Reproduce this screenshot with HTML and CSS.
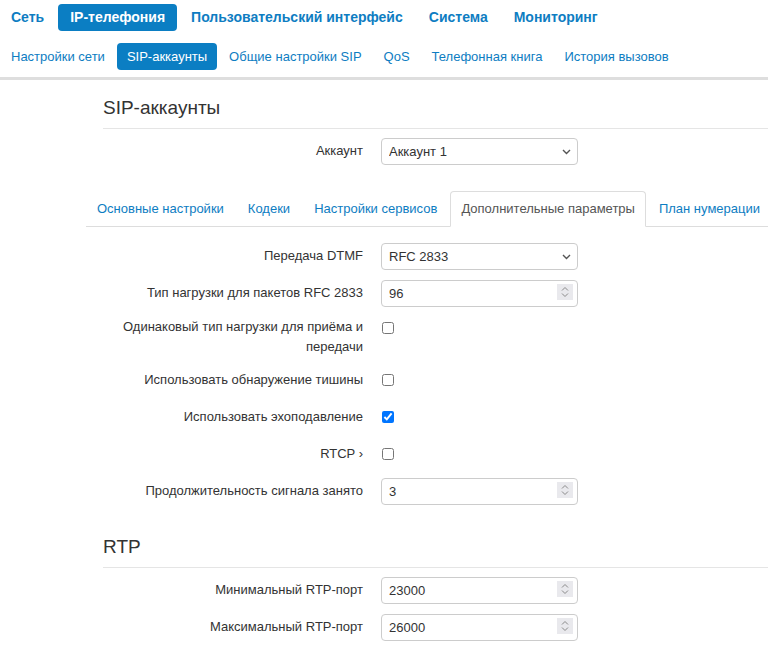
FILE: index.html
```html
<!DOCTYPE html>
<html lang="ru">
<head>
<meta charset="utf-8">
<title>SIP-аккаунты</title>
<link rel="stylesheet" href="styles.css">
</head>
<body>
<header class="header">
  <nav class="nav nav-main">
    <a class="nav-item">Сеть</a>
    <a class="nav-item active">IP-телефония</a>
    <a class="nav-item">Пользовательский интерфейс</a>
    <a class="nav-item">Система</a>
    <a class="nav-item">Мониторинг</a>
  </nav>
  <nav class="nav nav-sub">
    <a class="nav-item">Настройки сети</a>
    <a class="nav-item active">SIP-аккаунты</a>
    <a class="nav-item">Общие настройки SIP</a>
    <a class="nav-item">QoS</a>
    <a class="nav-item">Телефонная книга</a>
    <a class="nav-item">История вызовов</a>
  </nav>
</header>

<main class="main">
  <h2 class="section-title first">SIP-аккаунты</h2>
  <div class="row">
    <label class="label">Аккаунт</label>
    <div class="control select-wrap">
      <select class="input"><option>Аккаунт 1</option></select>
      <svg class="chev" width="9" height="6" viewBox="0 0 9 6"><path d="M1 1l3.5 3.5L8 1" fill="none" stroke="#555" stroke-width="1.4"/></svg>
    </div>
  </div>

  <ul class="tabs">
    <li class="tab">Основные настройки</li>
    <li class="tab">Кодеки</li>
    <li class="tab">Настройки сервисов</li>
    <li class="tab active">Дополнительные параметры</li>
    <li class="tab">План нумерации</li>
  </ul>

  <div class="form">
    <div class="row">
      <label class="label">Передача DTMF</label>
      <div class="control select-wrap">
        <select class="input"><option>RFC 2833</option></select>
        <svg class="chev" width="9" height="6" viewBox="0 0 9 6"><path d="M1 1l3.5 3.5L8 1" fill="none" stroke="#555" stroke-width="1.4"/></svg>
      </div>
    </div>
    <div class="row">
      <label class="label">Тип нагрузки для пакетов RFC 2833</label>
      <div class="control num-wrap">
        <input class="input" type="text" value="96">
        <span class="spin"><svg width="16" height="16" viewBox="0 0 16 16"><path d="M5 6.5L8 3.5l3 3M5 9.5L8 12.5l3-3" fill="none" stroke="#8a8a8a" stroke-width="1"/></svg></span>
      </div>
    </div>
    <div class="row row-check multi">
      <label class="label">Одинаковый тип нагрузки для приёма и передачи</label>
      <div class="control"><input class="check" type="checkbox"></div>
    </div>
    <div class="row row-check">
      <label class="label">Использовать обнаружение тишины</label>
      <div class="control"><input class="check" type="checkbox"></div>
    </div>
    <div class="row row-check">
      <label class="label">Использовать эхоподавление</label>
      <div class="control"><input class="check" type="checkbox" checked></div>
    </div>
    <div class="row row-check">
      <label class="label">RTCP ›</label>
      <div class="control"><input class="check" type="checkbox"></div>
    </div>
    <div class="row">
      <label class="label">Продолжительность сигнала занято</label>
      <div class="control num-wrap">
        <input class="input" type="text" value="3">
        <span class="spin"><svg width="16" height="16" viewBox="0 0 16 16"><path d="M5 6.5L8 3.5l3 3M5 9.5L8 12.5l3-3" fill="none" stroke="#8a8a8a" stroke-width="1"/></svg></span>
      </div>
    </div>
  </div>

  <h2 class="section-title second">RTP</h2>
  <div class="row">
    <label class="label">Минимальный RTP-порт</label>
    <div class="control num-wrap">
      <input class="input" type="text" value="23000">
      <span class="spin"><svg width="16" height="16" viewBox="0 0 16 16"><path d="M5 6.5L8 3.5l3 3M5 9.5L8 12.5l3-3" fill="none" stroke="#8a8a8a" stroke-width="1"/></svg></span>
    </div>
  </div>
  <div class="row">
    <label class="label">Максимальный RTP-порт</label>
    <div class="control num-wrap">
      <input class="input" type="text" value="26000">
      <span class="spin"><svg width="16" height="16" viewBox="0 0 16 16"><path d="M5 6.5L8 3.5l3 3M5 9.5L8 12.5l3-3" fill="none" stroke="#8a8a8a" stroke-width="1"/></svg></span>
    </div>
  </div>
</main>
</body>
</html>
```

FILE: styles.css
```css
html, body {
  margin: 0;
  padding: 0;
  background: #fff;
}
body {
  font-family: "Liberation Sans", Arial, sans-serif;
  font-size: 13px;
  color: #333;
  overflow: hidden;
}

.header {
  padding: 4px 0 7px 0;
  border-bottom: 3px solid #dedede;
}
.nav {
  display: flex;
  gap: 2px;
}
.nav-item {
  display: block;
  height: 27px;
  line-height: 27px;
  padding: 0 10px;
  border-radius: 4px;
  color: #0e7dc2;
  white-space: nowrap;
}
.nav-main .nav-item {
  font-size: 14px;
  font-weight: bold;
  padding: 0 12px;
}
.nav-main .nav-item:first-child {
  padding-left: 11px;
}
.nav-sub .nav-item:first-child {
  padding-left: 11px;
}
.nav-sub {
  margin-top: 12px;
}
.nav-item.active {
  background: #0b7ec3;
  color: #fff;
}

.main {
  padding-left: 86px;
}

.section-title {
  margin: 0 0 9px 17px;
  padding: 0 0 10px 0;
  font-size: 19px;
  font-weight: normal;
  line-height: 20px;
  color: #333;
  border-bottom: 1px solid #e5e5e5;
}
.section-title.first {
  margin-top: 18px;
}
.section-title.second {
  margin-top: 32px;
}

.row {
  display: grid;
  grid-template-columns: 260px 197px;
  column-gap: 18px;
  margin-left: 17px;
  margin-bottom: 10px;
  min-height: 27px;
}
.label {
  text-align: right;
  line-height: 20px;
  padding-top: 3px;
}
.row.multi .label {
  padding-top: 0;
}
.control {
  position: relative;
}
.input {
  box-sizing: border-box;
  width: 100%;
  height: 27px;
  margin: 0;
  padding: 0 7px;
  border: 1px solid #ccc;
  border-radius: 4px;
  background: #fff;
  font-family: "Liberation Sans", Arial, sans-serif;
  font-size: 13px;
  color: #333;
  -webkit-appearance: none;
  appearance: none;
  outline: none;
}
.chev {
  position: absolute;
  right: 7px;
  top: 11px;
  pointer-events: none;
}
.spin {
  position: absolute;
  right: 5px;
  top: 4px;
  width: 16px;
  height: 16px;
  background: #e9e9ed;
  display: flex;
}
.check {
  margin: 7px 0 0 1px;
  width: 12px;
  height: 12px;
}
.row.multi .check {
  margin-top: 5px;
}

.tabs {
  list-style: none;
  display: flex;
  margin: 26px 0 16px 0;
  padding: 0;
  border-bottom: 1px solid #ddd;
}
.tab {
  padding: 9px 10px;
  line-height: 16px;
  margin-right: 2px;
  margin-bottom: -1px;
  border: 1px solid transparent;
  border-radius: 4px 4px 0 0;
  color: #0e7dc2;
  white-space: nowrap;
}
.tab.active {
  color: #555;
  background: #fff;
  border-color: #ddd;
  border-bottom-color: #fff;
}
```
